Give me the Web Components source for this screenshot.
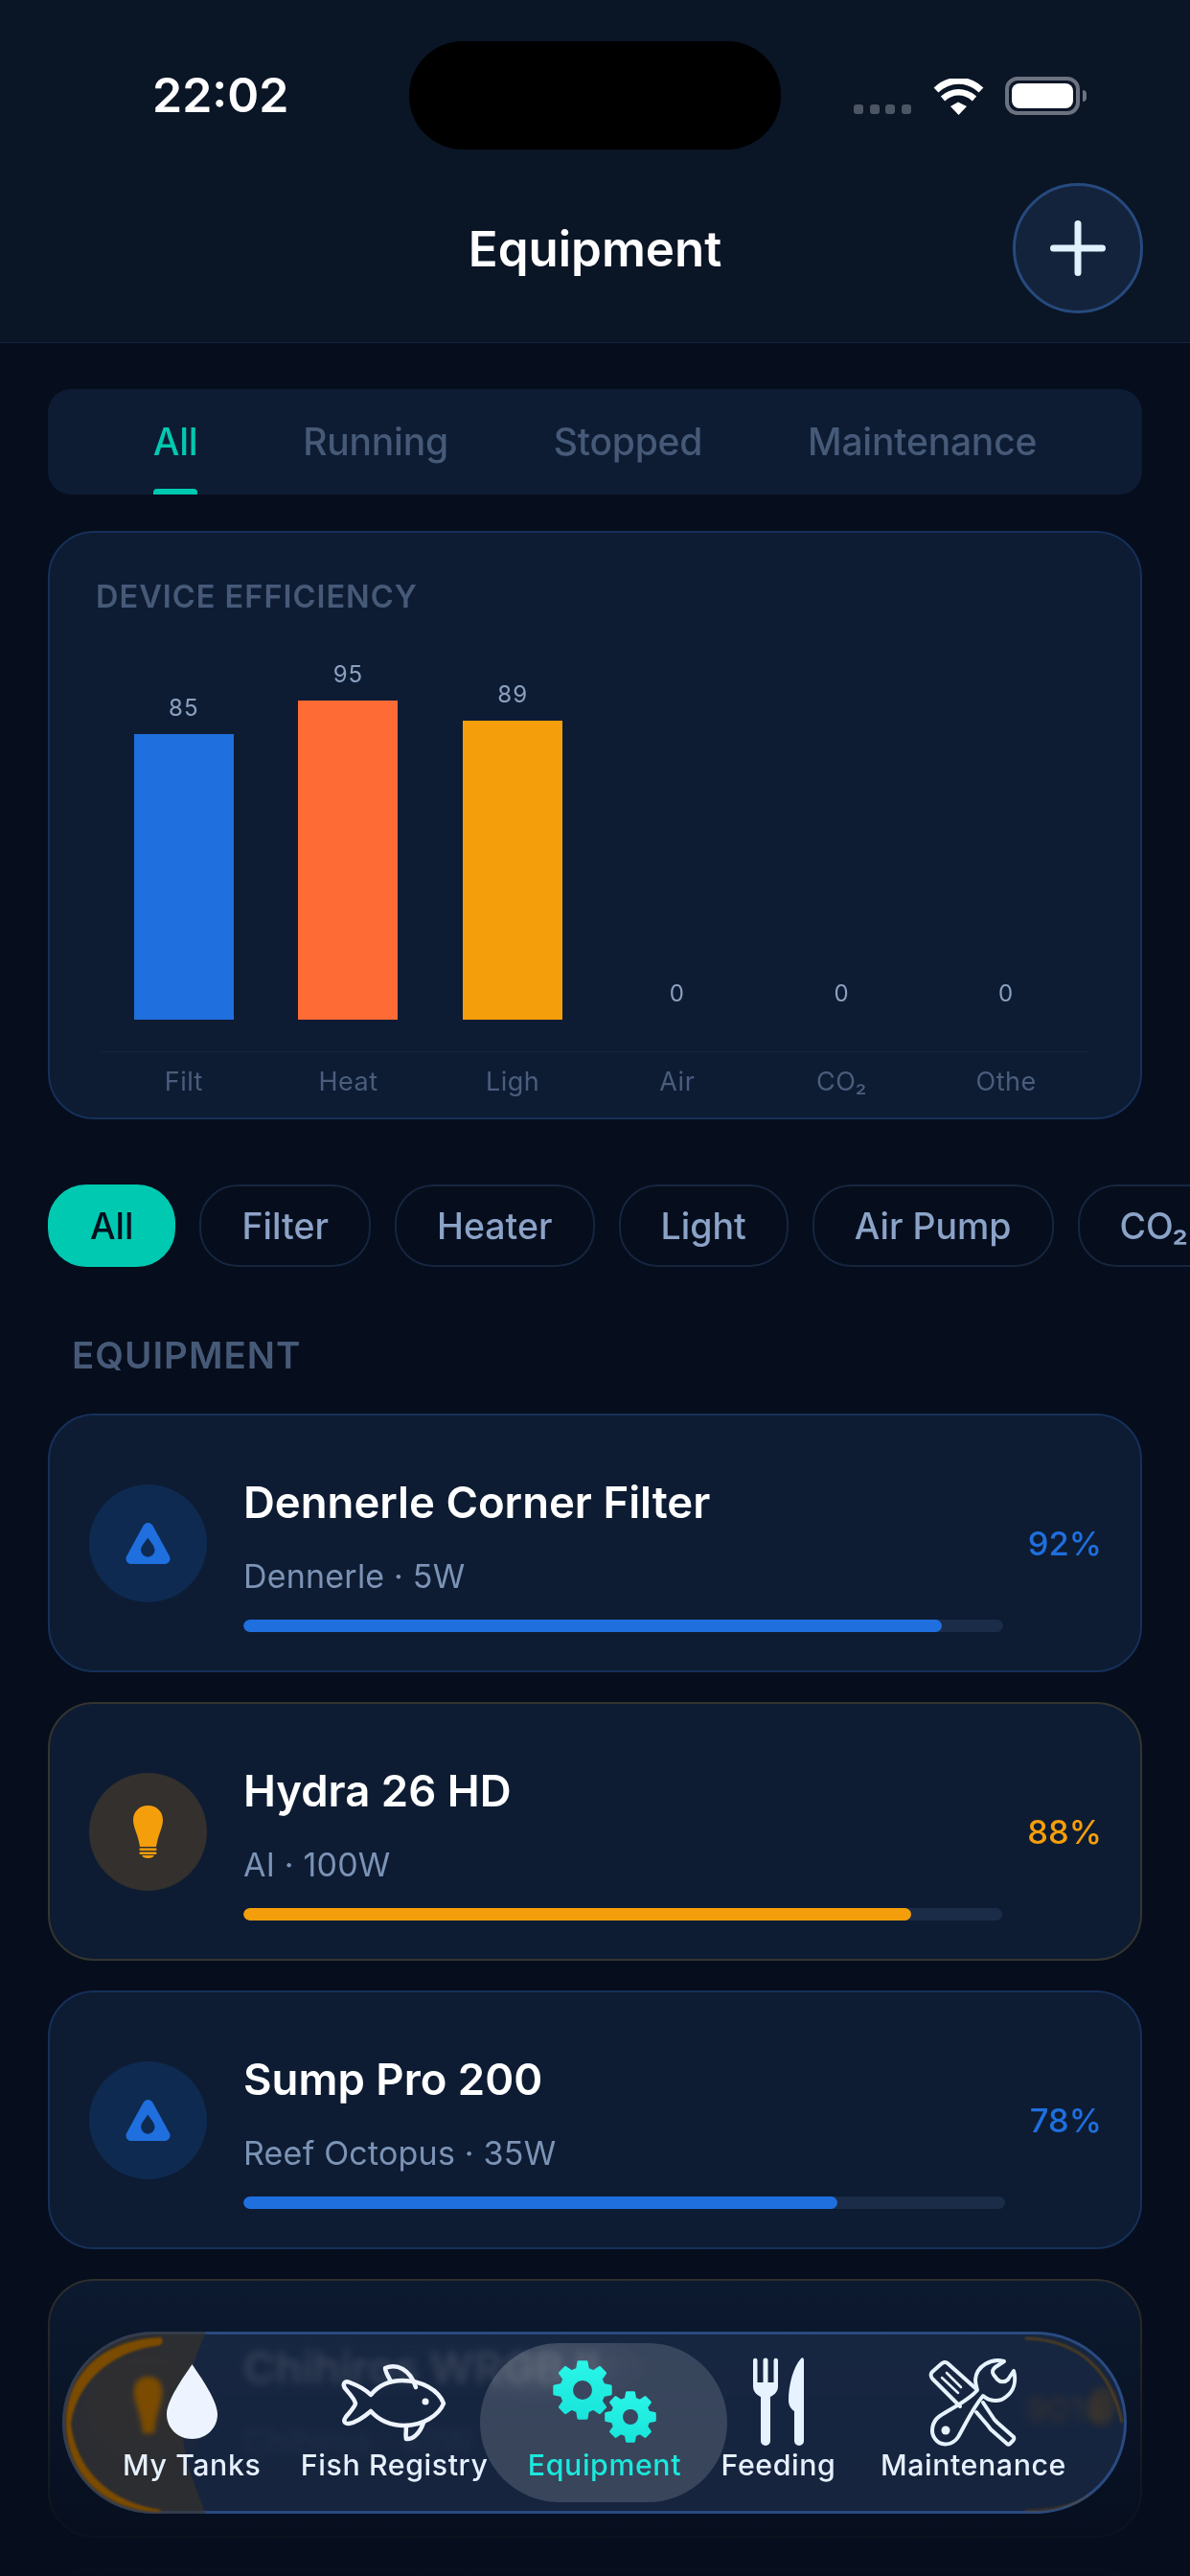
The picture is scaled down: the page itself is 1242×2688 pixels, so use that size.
<!DOCTYPE html>
<html>
<head>
<meta charset="utf-8">
<title>Equipment</title>
<style>
    html, body { margin: 0; height: 2688px; overflow: hidden; background: #060d1c; }
    body { position: relative; font-family: Inter, "Liberation Sans", sans-serif; color: #fff; }
    main { display: block; height: 2282px; overflow: hidden; padding: 48px 50px 0; }
</style>
</head>
<body>
<app-header title="Equipment"></app-header>
<main>
    <seg-tabs items="All,Running,Stopped,Maintenance"></seg-tabs>
    <chart-card title="DEVICE EFFICIENCY">
        <bar-col value="85" size="298" color="#1f6fde" label="Filt"></bar-col>
        <bar-col value="95" size="333" color="#ff6b35" label="Heat"></bar-col>
        <bar-col value="89" size="312" color="#f59e0b" label="Ligh"></bar-col>
        <bar-col value="0" size="0" label="Air"></bar-col>
        <bar-col value="0" size="0" label="CO₂"></bar-col>
        <bar-col value="0" size="0" label="Othe"></bar-col>
    </chart-card>
    <chip-row>
        <filter-chip active>All</filter-chip>
        <filter-chip>Filter</filter-chip>
        <filter-chip>Heater</filter-chip>
        <filter-chip>Light</filter-chip>
        <filter-chip>Air Pump</filter-chip>
        <filter-chip>CO₂</filter-chip>
    </chip-row>
    <section-label>EQUIPMENT</section-label>
    <equip-card name="Dennerle Corner Filter" sub="Dennerle · 5W" pct="92" kind="filter"></equip-card>
    <equip-card name="Hydra 26 HD" sub="AI · 100W" pct="88" kind="light"></equip-card>
    <equip-card name="Sump Pro 200" sub="Reef Octopus · 35W" pct="78" kind="filter"></equip-card>
    <equip-card name="Chihiros WRGB II" sub="Chihiros · 40W" pct="90" kind="light" nobar></equip-card>
    <equip-card kind="filter" nobar></equip-card>
</main>
<bottom-fade></bottom-fade>
<glass-nav>
    <nav-item icon="drop" label="My Tanks"></nav-item>
    <nav-item icon="fish" label="Fish Registry"></nav-item>
    <nav-item icon="gears" label="Equipment" active></nav-item>
    <nav-item icon="cutlery" label="Feeding"></nav-item>
    <nav-item icon="tools" label="Maintenance" style="margin-left:5px"></nav-item>
</glass-nav>

<script>
class AppHeader extends HTMLElement {
    connectedCallback() {
        const title = this.getAttribute('title') || '';
        this.attachShadow({ mode: 'open' });
        this.shadowRoot.innerHTML = `
            <style>
                :host { display: block; background: #0a1526; border-bottom: 1px solid #15263f; height: 357px; box-sizing: content-box; }
                .status { display: grid; grid-template-columns: 427px 388px 1fr; padding-top: 43px; height: 113px; }
                .time { padding-left: 159px; font-size: 50px; font-weight: 600; line-height: 113px; letter-spacing: 0; }
                .island { background: #000; border-radius: 56px; }
                .right { display: flex; align-items: flex-end; padding: 37px 0 0 76px; height: 40px; }
                .dots { display: flex; gap: 6.5px; margin-right: 23px; margin-bottom: 1px; }
                .dots i { width: 10px; height: 10px; border-radius: 3px; background: #4b5563; }
                .batt { margin-left: 22px; width: 78px; height: 40px; box-sizing: border-box; border: 4px solid #6b7280; border-radius: 13px; padding: 3px; }
                .batt b { display: block; height: 100%; background: #fff; border-radius: 8px; }
                .nub { width: 4px; height: 12px; margin: 0 0 14px 3px; background: #6b7280; border-radius: 0 4px 4px 0; }
                .row { display: grid; grid-template-columns: 1fr auto 1fr; align-items: center; margin-top: 35px; padding: 0 49px; height: 135px; }
                h1 { grid-column: 2; margin: 0; font-size: 51px; font-weight: 600; }
                .add { grid-column: 3; justify-self: end; width: 136px; height: 136px; box-sizing: border-box; border-radius: 50%; background: #14233c; border: 3px solid #264a7e; display: flex; align-items: center; justify-content: center; }
            </style>
            <div class="status">
                <div class="time">22:02</div>
                <div class="island"></div>
                <div class="right">
                    <div class="dots"><i></i><i></i><i></i><i></i></div>
                    <svg width="53" height="38" viewBox="0 0 53 38" fill="none" stroke="#fff" stroke-width="7">
                        <path d="M3 12C17 -1 36 -1 50 12"/>
                        <path d="M10 21C20 12 33 12 43 21" stroke-width="6.5"/>
                        <path d="M18 29L26 24.500L35 29L26.500 38Z" fill="#fff" stroke="none"/>
                    </svg>
                    <div class="batt"><b></b></div>
                    <div class="nub"></div>
                </div>
            </div>
            <div class="row">
                <h1>${title}</h1>
                <div class="add">
                    <svg width="58" height="58" viewBox="0 0 58 58" stroke="#e0f2fe" stroke-width="7" stroke-linecap="round">
                        <path d="M29 3.500V54.500M3.500 29H54.500"/>
                    </svg>
                </div>
            </div>
        `;
    }
}
customElements.define('app-header', AppHeader);

class SegTabs extends HTMLElement {
    connectedCallback() {
        const items = (this.getAttribute('items') || '').split(',');
        this.attachShadow({ mode: 'open' });
        this.shadowRoot.innerHTML = `
            <style>
                :host { display: flex; justify-content: space-evenly; height: 110px; background: #0d1c33; border-radius: 24px; overflow: hidden; }
                span { position: relative; font-size: 39px; font-weight: 500; line-height: 110px; letter-spacing: -.2px; color: #465a78; }
                span.on { color: #00c9b1; }
                span.on::after { content: ''; position: absolute; left: 0; right: 0; bottom: 0; height: 6px; background: #00c9b1; border-radius: 4px 4px 0 0; }
            </style>
            ${items.map((t, i) => `<span class="${i === 0 ? 'on' : ''}">${t}</span>`).join('')}
        `;
    }
}
customElements.define('seg-tabs', SegTabs);

class ChartCard extends HTMLElement {
    connectedCallback() {
        const title = this.getAttribute('title') || '';
        this.attachShadow({ mode: 'open' });
        this.shadowRoot.innerHTML = `
            <style>
                :host { display: block; margin-top: 38px; height: 614px; box-sizing: border-box; padding: 47px 54px 0; background: #0d1c33; border: 2px solid #16305a; border-radius: 48px; }
                h2 { margin: 0 0 0 -6px; font-size: 32.500px; line-height: 40px; font-weight: 600; letter-spacing: 1px; color: #465a78; }
                .plot { display: grid; grid-template-columns: repeat(6, 1fr); height: 523px; }
            </style>
            <h2>${title}</h2>
            <div class="plot"><slot></slot></div>
        `;
    }
}
customElements.define('chart-card', ChartCard);

class BarCol extends HTMLElement {
    connectedCallback() {
        const value = this.getAttribute('value');
        const size = this.getAttribute('size');
        const color = this.getAttribute('color') || 'transparent';
        const label = this.getAttribute('label');
        this.attachShadow({ mode: 'open' });
        this.shadowRoot.innerHTML = `
            <style>
                :host { display: grid; grid-template-rows: 1fr 33px 1px 68px; justify-items: center; }
                .top { display: flex; flex-direction: column; align-items: center; justify-content: flex-end; }
                .val { font-size: 24px; line-height: 30px; letter-spacing: 1px; margin-bottom: 12px; color: #8ba0bf; }
                .bar { width: 104px; background: ${color}; }
                .line { width: 100%; background: #16263f; }
                .lab { font-size: 27px; line-height: 62px; letter-spacing: .5px; color: #4a5d7c; }
            </style>
            <div class="top">
                <div class="val">${value}</div>
                <div class="bar" style="height:${size}px"></div>
            </div>
            <div></div>
            <div class="line"></div>
            <div class="lab">${label}</div>
        `;
    }
}
customElements.define('bar-col', BarCol);

class ChipRow extends HTMLElement {
    connectedCallback() {
        this.attachShadow({ mode: 'open' });
        this.shadowRoot.innerHTML = `
            <style>
                :host { display: flex; gap: 25px; margin: 68px -50px 0 0; overflow: hidden; }
            </style>
            <slot></slot>
        `;
    }
}
customElements.define('chip-row', ChipRow);

class FilterChip extends HTMLElement {
    connectedCallback() {
        this.attachShadow({ mode: 'open' });
        this.shadowRoot.innerHTML = `
            <style>
                :host { flex: none; display: block; height: 86px; box-sizing: border-box; padding: 0 42px; border: 2px solid #16263f; border-radius: 40px; font-size: 37.500px; font-weight: 500; line-height: 84px; color: #8ba3c7; }
                :host([active]) { background: #00c9b1; border-color: #00c9b1; color: #04101f; }
            </style>
            <slot></slot>
        `;
    }
}
customElements.define('filter-chip', FilterChip);

class SectionLabel extends HTMLElement {
    connectedCallback() {
        this.attachShadow({ mode: 'open' });
        this.shadowRoot.innerHTML = `
            <style>
                :host { display: block; margin: 71px 0 0 25px; height: 82px; font-size: 38.500px; line-height: 42px; font-weight: 600; letter-spacing: 1px; color: #465a78; }
            </style>
            <slot></slot>
        `;
    }
}
customElements.define('section-label', SectionLabel);

const CARD_ICONS = {
    filter: `<svg width="47" height="43" viewBox="0 0 47 43">
        <path d="M23.500 5.500L41 37.500H6Z" fill="#1f6fde" stroke="#1f6fde" stroke-width="11" stroke-linejoin="round"/>
        <path d="M23.300 15.500C26 20 30.500 24 30.500 28.500A7.200 7.200 0 0 1 16.100 28.500C16.100 24 20.600 20 23.300 15.500Z" fill="#0f2a50"/>
    </svg>`,
    light: `<svg width="31" height="55" viewBox="0 0 31 55" fill="#f59e0b">
        <path d="M15.500 0C24 0 31 6 31 15C31 23 26 30 24 43H7C5 30 0 23 0 15C0 6 7 0 15.500 0Z"/>
        <rect x="6.500" y="44.500" width="18" height="2.500" rx="1"/>
        <rect x="6.500" y="48.500" width="18" height="2.500" rx="1"/>
        <path d="M9 52H22C21 54 19 55 15.500 55C12 55 10 54 9 52Z"/>
    </svg>`
};

class EquipCard extends HTMLElement {
    connectedCallback() {
        const name = this.getAttribute('name') || '';
        const sub = this.getAttribute('sub') || '';
        const pct = this.getAttribute('pct');
        const kind = this.getAttribute('kind') || 'filter';
        const color = kind === 'light' ? '#f59e0b' : '#1f6fde';
        const circle = kind === 'light' ? '#33302e' : '#0f2a50';
        const border = kind === 'light' ? '#34352f' : '#16305a';
        const bar = this.hasAttribute('nobar') ? '' : `<div class="track"><div class="fill"></div></div>`;
        this.attachShadow({ mode: 'open' });
        this.shadowRoot.innerHTML = `
            <style>
                :host { display: flex; align-items: center; gap: 38px; height: 270px; margin-bottom: 31px; box-sizing: border-box; padding: 0 40px 0 41px; background: #0d1c33; border: 2px solid ${border}; border-radius: 48px; }
                .icon { flex: none; width: 123px; height: 123px; border-radius: 50%; background: ${circle}; display: flex; align-items: center; justify-content: center; }
                .body { flex: 1; align-self: flex-start; padding-top: 64px; }
                .name { font-size: 45.500px; line-height: 54px; font-weight: 600; }
                .sub { font-size: 34px; line-height: 42px; margin-top: 29px; letter-spacing: .2px; color: #7c93b5; }
                .track { height: 13px; margin-top: 24px; background: #1a2c47; border-radius: 7px; overflow: hidden; }
                .fill { height: 100%; width: ${pct}%; background: ${color}; border-radius: 7px; }
                .pct { flex: none; margin-left: -12px; font-size: 34.500px; font-weight: 500; color: ${color}; }
            </style>
            <div class="icon">${CARD_ICONS[kind]}</div>
            <div class="body">
                <div class="name">${name}</div>
                <div class="sub">${sub}</div>
                ${bar}
            </div>
            <div class="pct">${pct ? pct + '%' : ''}</div>
        `;
    }
}
customElements.define('equip-card', EquipCard);

class BottomFade extends HTMLElement {
    connectedCallback() {
        this.attachShadow({ mode: 'open' });
        this.shadowRoot.innerHTML = `
            <style>
                :host { position: absolute; left: 0; right: 0; top: 2340px; bottom: 0; background: linear-gradient(180deg, rgba(6,13,28,0) 0%, rgba(6,13,28,.3) 25%, rgba(6,13,28,.88) 88%, rgba(6,13,28,.92) 100%); }
            </style>
        `;
    }
}
customElements.define('bottom-fade', BottomFade);

class GlassNav extends HTMLElement {
    connectedCallback() {
        this.attachShadow({ mode: 'open' });
        this.shadowRoot.innerHTML = `
            <style>
                :host { position: absolute; left: 65px; top: 2433px; width: 1111px; height: 190px; box-sizing: border-box; border: 3px solid #2a4a80; border-radius: 95px; background: rgba(28,42,68,.78); -webkit-backdrop-filter: blur(4px) saturate(1.5); backdrop-filter: blur(4px) saturate(1.5); display: flex; justify-content: space-between; padding: 0 60px; }
                svg { position: absolute; left: -3px; top: -3px; pointer-events: none; }
            </style>
            <svg width="1111" height="190" viewBox="0 0 1111 190" fill="none">
                <defs>
                    <clipPath id="c"><rect width="1111" height="190" rx="95"/></clipPath>
                    <filter id="soft"><feGaussianBlur stdDeviation="1"/></filter>
                    <filter id="blurry"><feGaussianBlur stdDeviation="2.500"/></filter>
                    <filter id="softer"><feGaussianBlur stdDeviation="4"/></filter>
                </defs>
                <g clip-path="url(#c)">
                    <path d="M0 95C0 40 40 0 95 0H150C140 25 125 60 125 95C125 130 140 165 150 190H95C40 190 0 150 0 95Z" fill="#3c342a" opacity=".6"/>
                    <path d="M103 6C107 11 104 14 98 15C55 20 16 50 9 96C14 140 45 178 104 186L100 188C40 186 4 145 4 95C4 45 42 8 103 6Z" fill="#7a4c06" filter="url(#soft)"/>
                    <path d="M75 62C75 52 82 47 90 47C98 47 104 52 104 62C104 74 97 86 96 106H84C83 86 75 74 75 62Z" fill="#7a4c06" filter="url(#blurry)"/>
                    <path d="M1005 7C1060 8 1095 40 1106 95" stroke="#6b4a12" stroke-width="2.500" filter="url(#soft)" opacity=".8"/>
                    <path d="M1005 187C1040 186 1060 180 1075 170" stroke="#6b4a12" stroke-width="2" filter="url(#soft)" opacity=".6"/>
                    <ellipse cx="1085" cy="78" rx="14" ry="20" fill="#6b4a12" opacity=".35" filter="url(#softer)"/>
                </g>
            </svg>
            <slot></slot>
        `;
    }
}
customElements.define('glass-nav', GlassNav);

function gearPath(cx, cy, r) {
    // 8 teeth, first one pointing straight up
    const pts = [];
    for (let i = 0; i < 8; i++) {
        const a = -Math.PI / 2 + i * Math.PI / 4;
        [[-14, .76], [-8, 1], [8, 1], [14, .76]].forEach(([d, k]) => {
            const t = a + d * Math.PI / 180;
            pts.push((cx + Math.cos(t) * r * k).toFixed(1) + ' ' + (cy + Math.sin(t) * r * k).toFixed(1));
        });
    }
    return 'M' + pts.join('L') + 'Z';
}

const NAV_ICONS = {
    drop: `<svg width="53" height="78" viewBox="0 0 53 78"><path d="M26.500 0C30 6 53 36 53 52C53 67 41 78 26.500 78C12 78 0 67 0 52C0 36 23 6 26.500 0Z" fill="#eef4ff"/></svg>`,
    fish: `<svg width="107" height="81" viewBox="0 0 107 81" fill="none" stroke="#eef4ff" stroke-width="4.500" stroke-linejoin="round" stroke-linecap="round" style="overflow:visible">
        <path d="M29 33C38 22 50 18 62 18C82 18 100 28 105 42C100 54 84 65 64 65C50 65 38 60 29 50C22 56 14 62 6 63C1 63 0 60 3 56C8 50 12 46 13 42C12 37 7 32 2 26C-1 21 2 18 7 20C15 23 23 27 29 33Z"/>
        <path d="M50 19C46 12 44 8 44 5C56 0 70 6 76 25"/>
        <path d="M66 65C66 70 65 76 66 79C72 80 80 74 84 62"/>
        <circle cx="86" cy="40" r="3.500" fill="#eef4ff" stroke="none"/>
    </svg>`,
    gears: `<svg width="108" height="86" viewBox="0 0 108 86">
        <defs><linearGradient id="g" x1="0" y1="0" x2="0" y2="1"><stop offset="0" stop-color="#2af5e8"/><stop offset="1" stop-color="#18e4da"/></linearGradient></defs>
        <path d="${gearPath(31, 31, 29.5)}" fill="url(#g)" stroke="url(#g)" stroke-width="3" stroke-linejoin="round"/>
        <circle cx="31" cy="31" r="10" fill="#3a465f"/>
        <path d="${gearPath(81, 59, 25.5)}" fill="url(#g)" stroke="url(#g)" stroke-width="3" stroke-linejoin="round"/>
        <circle cx="81" cy="59" r="8" fill="#3a465f"/>
    </svg>`,
    cutlery: `<svg width="53" height="92" viewBox="0 0 53 92" fill="#e6f3ff">
        <path d="M0 3A2.250 2.250 0 0 1 4.500 3V26H10.500V3A2.500 2.500 0 0 1 15.500 3V26H21.500V3A2.250 2.250 0 0 1 26 3V30C26 36 22 39 18 41V87A5 5 0 0 1 8 87V41C4 39 0 36 0 30Z"/>
        <path d="M50 1C52 -1 53 1 53 3V87A5 5 0 0 1 43 87V56C40 54 37 50 37 45C37 28 42 10 50 1Z"/>
    </svg>`,
    tools: `<svg width="90" height="91" viewBox="0 0 90 91" fill="none" stroke="#e6f3ff" stroke-width="4" stroke-linejoin="round" stroke-linecap="round" style="overflow:visible">
        <path d="M31 50L3 22C0 19 0 16 2 14L11 6C13 4 16 3 18 5L47 31"/>
        <path d="M12 20L29 36M17 15L32 30" stroke-width="2.500"/>
        <path d="M55 46L67 64L70 67L87 82C88 84 87 85 86 86L83 89C82 90 81 90 80 89L63 74L60 70L48 56"/>
        <path d="M77 3C64 -1 48 8 47 22C47 26 48 29 49 33C40 44 22 52 10 60C1 66 0 78 5 84C11 92 23 91 29 82C36 70 44 52 55 39C62 45 72 46 79 40C87 34 90 24 87 13L81 22C78 25 73 25 70 22L66 17C64 14 65 11 68 9Z"/>
        <circle cx="16" cy="75" r="4.500" fill="#e6f3ff" stroke="none"/>
    </svg>`
};

class NavItem extends HTMLElement {
    connectedCallback() {
        const label = this.getAttribute('label');
        const icon = NAV_ICONS[this.getAttribute('icon')];
        this.attachShadow({ mode: 'open' });
        this.shadowRoot.innerHTML = `
            <style>
                :host { position: relative; display: flex; flex-direction: column; align-items: center; padding-top: 22px; color: #e6f0ff; }
                :host([active]) { color: #1ce8dc; }
                .pill { display: none; position: absolute; top: 9px; bottom: 9px; left: -50px; right: -48px; border-radius: 84px; background: radial-gradient(ellipse 120px 40px at 60px 25px, rgba(255,255,255,.08), transparent), rgba(255,255,255,.15); }
                :host([active]) .pill { display: block; }
                .ic { position: relative; height: 96px; display: flex; align-items: center; justify-content: center; }
                .lab { position: relative; font-size: 30.300px; line-height: 36px; font-weight: 500; letter-spacing: .6px; white-space: nowrap; }
            </style>
            <div class="pill"></div>
            <div class="ic">${icon}</div>
            <div class="lab">${label}</div>
        `;
    }
}
customElements.define('nav-item', NavItem);
</script>
</body>
</html>
